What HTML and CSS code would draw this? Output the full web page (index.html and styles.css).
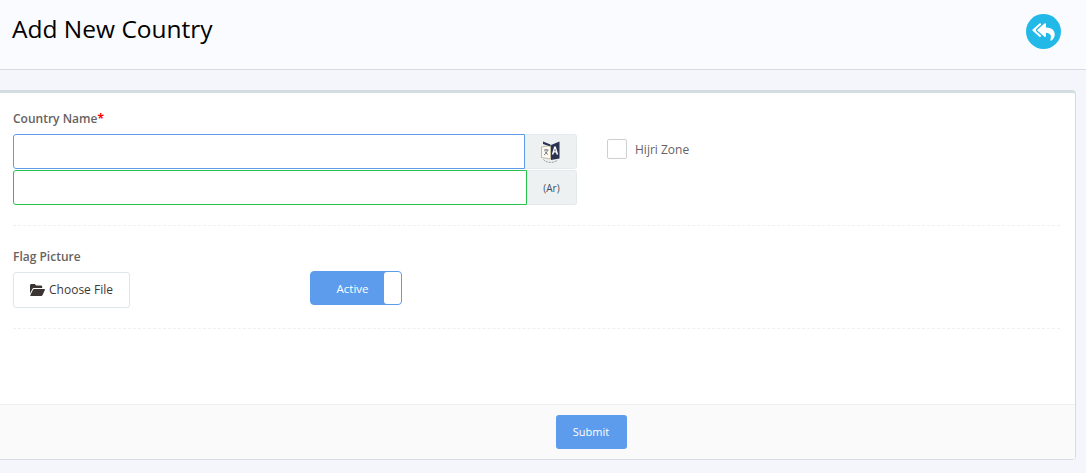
FILE: index.html
```html
<!DOCTYPE html>
<html lang="en">
<head>
<meta charset="utf-8">
<title>Add New Country</title>
<link rel="stylesheet" href="styles.css">
</head>
<body>
<header class="page-head">
  <h1 class="page-title">Add New Country</h1>
  <a class="back-btn" href="#" aria-label="Back">
    <svg width="23" height="20" viewBox="0 0 576 512"><path fill="#fff" d="M136.309 189.836L312.313 37.851C327.72 24.546 352 35.348 352 56.015v82.763c129.182 10.231 224 52.212 224 183.548 0 61.441-39.582 122.309-83.333 154.132-13.653 9.931-33.111-2.533-28.077-18.631 38.512-123.162-3.922-169.482-112.59-182.015v84.175c0 20.701-24.3 31.453-39.687 18.164L136.309 226.164c-11.071-9.561-11.086-26.753 0-36.328zm-128 36.328L184.313 378.149C199.7 391.439 224 380.687 224 359.986v-15.818l-108.606-93.785A55.96 55.96 0 0 1 96 207.998a55.953 55.953 0 0 1 19.393-42.38L224 71.832V56.015c0-20.667-24.28-31.469-39.687-18.164L8.309 189.836c-11.086 9.575-11.071 26.767 0 36.328z"/></svg>
  </a>
</header>
<main class="card">
  <div class="card-body">
    <div class="row row-name">
      <div class="name-col">
        <label class="field-label">Country Name<span class="req">*</span></label>
        <div class="input-group">
          <input class="text-input input-en" type="text">
          <span class="addon">
            <svg width="22" height="24" viewBox="0 0 22 24">
              <path fill="#fbfaf3" stroke="#b3ab86" stroke-width=".8" d="M1.500 7 10.500 5.500V19L1.500 17.500z"/>
              <path fill="#2b3350" d="M3 1.500 10.500 4.500V6.500L3 4z"/>
              <path fill="#2b3350" d="M11 5 19.500 1.500V18.500L11 20z"/>
              <path fill="none" stroke="#6c6a70" stroke-width=".9" d="M4 10h4.500M6 9v1M7.500 10c-.5 2.500-2 4-3.500 5M5 11.500c.6 1.300 1.700 2.300 3 3"/>
              <path fill="#fff" d="M14.200 6.500h1.600l2.400 8h-1.700l-.5-1.900h-2.100l-.5 1.900h-1.600zm.8 1.900-.7 2.900h1.400z"/>
              <path fill="none" stroke="#8e8e8e" stroke-width=".9" stroke-dasharray="2 1" d="M3.500 19.500c2 3.500 11 4 14 .5"/>
            </svg>
          </span>
        </div>
        <div class="input-group">
          <input class="text-input input-ar" type="text">
          <span class="addon addon-ar">(Ar)</span>
        </div>
      </div>
      <label class="check-wrap">
        <span class="check-box"></span>
        <span class="check-text">Hijri Zone</span>
      </label>
    </div>
    <div class="row row-flag">
      <div class="flag-col">
        <label class="field-label">Flag Picture</label>
        <button class="file-btn" type="button">
          <svg width="15" height="12" viewBox="0 0 15 12"><path fill="#3a3532" d="M0 1.500C0 .700.600 0 1.400 0h3.400l1.400 1.500h4.600c.8 0 1.400.6 1.400 1.400V4H4.200c-1 0-1.600.4-2 1.200L0 9.500z"/><path fill="#3a3532" d="M4 5h10.300c.6 0 .9.500.6 1l-2.300 5c-.3.600-.7 1-1.400 1H.8c-.5 0-.7-.4-.5-.8L3 5.800C3.200 5.300 3.500 5 4 5z"/></svg>
          <span class="file-text">Choose File</span>
        </button>
      </div>
      <div class="switch">
        <span class="switch-label">Active</span>
        <span class="switch-knob"></span>
      </div>
    </div>
  </div>
  <footer class="card-foot">
    <button class="submit-btn" type="button">Submit</button>
  </footer>
</main>
</body>
</html>
```
FILE: styles.css
```css
* { box-sizing: border-box; }
html, body { height: 100%; }
body {
  margin: 0;
  background: #f4f6fb;
  font-family: "Open Sans", "Noto Sans", sans-serif;
  color: #67625f;
  overflow: hidden;
}
.page-head {
  height: 70px;
  background: #fafbfe;
  border-bottom: 1px solid #d5dbe0;
  display: flex;
  align-items: flex-start;
  justify-content: space-between;
  padding: 14px 25px 0 12px;
}
.page-title {
  margin: 0;
  font-size: 24.500px;
  font-weight: 400;
  line-height: 30px;
  color: #000;
}
.back-btn {
  width: 35px;
  height: 35px;
  border-radius: 50%;
  background: #22b9e8;
  display: flex;
  align-items: center;
  justify-content: center;
}
.card {
  width: 1076px;
  height: 370px;
  margin-top: 20px;
  background: #fff;
  border-top: 3px solid #d2dde1;
  border-right: 1px solid #d5dbe0;
  border-bottom: 1px solid #d5dbe0;
  border-radius: 0 4px 4px 0;
  display: flex;
  flex-direction: column;
}
.card-body {
  flex: 1;
  padding: 16px 15px 0 13px;
}
.row {
  display: flex;
  border-bottom: 1px dashed #eef0f2;
}
.row-name { height: 117px; gap: 30px; }
.row-flag { height: 103px; padding-top: 21px; gap: 180px; }
.name-col { width: 564px; }
.field-label {
  display: block;
  font-size: 12px;
  font-weight: 600;
  line-height: 20px;
  color: #67625f;
}
.req { color: #f00; font-weight: 700; }
.input-group { display: flex; height: 36px; }
.name-col .field-label { margin-bottom: 5px; }
.text-input {
  height: 35px;
  flex: 1;
  min-width: 0;
  background: #fff;
  outline: none;
  padding: 0 8px;
}
.input-en { border: 1px solid #5d9cec; border-radius: 3px 0 0 3px; }
.input-ar { border: 1px solid #27c24c; border-radius: 3px 0 0 3px; }
.addon {
  width: 52px;
  height: 35px;
  background: #edf1f2;
  border: 1px solid #e4eaec;
  border-left: 0;
  border-radius: 0 3px 3px 0;
  display: flex;
  align-items: center;
  justify-content: center;
}
.addon-ar {
  width: 50px;
  font-size: 10px;
  color: #3f4f60;
}
.check-wrap {
  display: flex;
  align-items: center;
  gap: 8px;
  height: 20px;
  margin-top: 30px;
  font-size: 12px;
}
.check-box {
  width: 20px;
  height: 20px;
  background: #fff;
  border: 1px solid #cfcfcf;
  border-radius: 2px;
}
.check-text { color: #67625f; }
.flag-col { width: 117px; }
.flag-col .field-label { margin-bottom: 5px; }
.file-btn {
  width: 117px;
  height: 36px;
  background: #fff;
  border: 1px solid #dde6e9;
  border-radius: 3px;
  font: 400 12px "Open Sans", "Noto Sans", sans-serif;
  color: #3d3a38;
  display: flex;
  align-items: center;
  justify-content: center;
  gap: 4px;
  padding: 0;
}
.file-text { margin-bottom: 1px; }
.switch {
  width: 92px;
  height: 34px;
  margin-top: 24px;
  background: #5d9cec;
  border: 1px solid #5d9cec;
  border-radius: 4px;
  display: flex;
  align-items: stretch;
}
.switch-label {
  flex: 1;
  color: #fff;
  font-size: 11.500px;
  font-weight: 500;
  line-height: 33px;
  text-align: center;
  padding-left: 10px;
}
.switch-knob {
  width: 17px;
  background: #fff;
  border-radius: 3px;
}
.card-foot {
  height: 55px;
  padding-left: 107px;
  background: #fafafa;
  border-top: 1px solid #eceef0;
  display: flex;
  justify-content: center;
  align-items: center;
}
.submit-btn {
  width: 71px;
  height: 34px;
  padding: 0 0 1px;
  background: #5d9cec;
  border: 0;
  border-radius: 3px;
  color: #fff;
  font: 500 11px "Open Sans", "Noto Sans", sans-serif;
}
```
